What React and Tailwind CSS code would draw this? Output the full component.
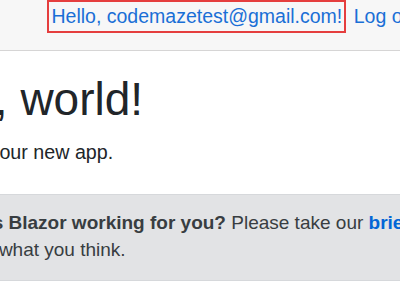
import { Pencil } from 'lucide-react';

function App() {
  return (
    <div className="w-[400px] h-[284px] overflow-hidden bg-white font-['Liberation_Sans',Arial,sans-serif] text-[#212529]">
      {/* top row */}
      <div className="h-[51px] bg-[#f7f7f7] border-b border-[#d6d5d5] flex items-start pl-[47px] text-[19.5px] text-[#1a6fd6] whitespace-nowrap">
        <a className="h-[33px] border-2 border-[#e53e3e] pl-[2.5px] pr-[2px] pt-[4px] leading-[20px]">
          Hello, codemazetest@gmail.com!
        </a>
        <a className="ml-[7.5px] pt-[6px] leading-[20px]">Log out</a>
      </div>

      {/* content */}
      <div className="-ml-[110px] w-[720px]">
        <h1 className="mt-[20.5px] text-[46px] leading-[1.2] font-normal">Hello, world!</h1>
        <p className="mt-[11px] -ml-[9.5px] text-[19.7px] leading-[28.5px]">Welcome to your new app.</p>

        <div className="mt-[27.5px] border border-[#d6d8db] bg-[#e2e3e5] text-[#383d41] text-[19px] leading-[27px] pt-[14px] pb-[17px] pl-[16px]">
          <Pencil className="inline-block w-[19px] h-[19px] mr-[16px] align-[-2px]" aria-hidden="true" />
          <strong className="font-bold">How is Blazor working for you?</strong>{' '}
          <span className="whitespace-nowrap">
            Please take our{' '}
            <a className="font-bold text-[#0366d6]">brief survey</a>
          </span>
          <br />
          and tell us what you think.
        </div>
      </div>
    </div>
  );
}

export default App;
